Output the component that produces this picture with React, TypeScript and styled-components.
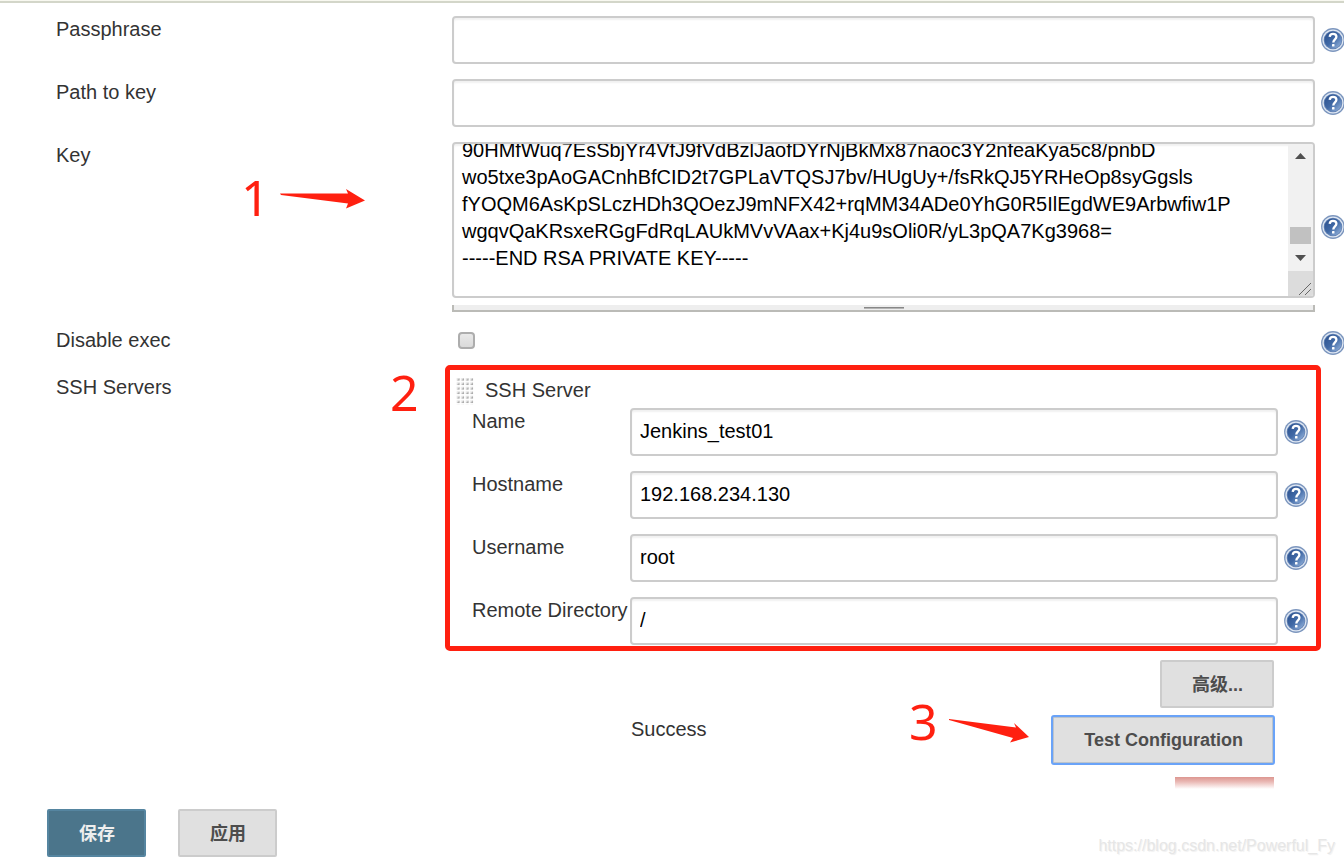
import React, { useLayoutEffect, useRef } from "react";
import styled, { createGlobalStyle, css } from "styled-components";

const RED = "#ff2010";

const GlobalStyle = createGlobalStyle`
  * { box-sizing: border-box; }
  body {
    margin: 0;
    background: #fff;
    color: #333;
    font-family: "Liberation Sans", Arial, "Noto Sans CJK SC", sans-serif;
    font-size: 20px;
    line-height: 26px;
  }
  button, input, textarea { font-family: inherit; }
`;

const Page = styled.main`
  position: relative;
  overflow: hidden;
  min-height: 100vh;
  border-top: 1px solid #f8f8f0;
`;

const Form = styled.form`
  border-top: 2px solid #d3d6c9;
  padding: 13px 0 0 56px;
`;

const Rows = styled.div`
  display: flex;
  flex-direction: column;
  gap: 15px;
`;

const Row = styled.div`
  position: relative;
  display: grid;
  grid-template-columns: 396px minmax(0, 1fr) 29px;
`;

const Label = styled.label`
  align-self: start;
  justify-self: start;
  white-space: nowrap;
`;

const Caption = styled.span`
  white-space: nowrap;
`;

const fieldFrame = css`
  border: 2px solid #ccc;
  border-radius: 4px;
  background: #fff;
  box-shadow: inset 0 2px 2px rgba(0, 0, 0, 0.06);
`;

const TextInput = styled.input`
  ${fieldFrame}
  width: 100%;
  height: 48px;
  padding: 0 8px 1px;
  color: #000;
  font-size: 20px;
  outline: none;
`;

const KeyBox = styled.div`
  ${fieldFrame}
  display: flex;
  height: 156px;
  overflow: hidden;
`;

const KeyText = styled.textarea`
  flex: 1;
  min-width: 0;
  height: 100%;
  padding: 6px 8px;
  border: 0;
  outline: none;
  resize: none;
  overflow: hidden;
  background: transparent;
  color: #000;
  font-size: 20px;
  line-height: 27px;
  white-space: pre;
`;

const ScrollTrack = styled.div`
  display: flex;
  flex-direction: column;
  width: 25px;
  background: #f1f1f1;
`;

const ArrowCell = styled.svg`
  display: block;
  width: 25px;
  height: 25px;
`;

const ThumbArea = styled.div`
  display: flex;
  flex: 1;
  flex-direction: column;
  justify-content: flex-end;
  padding: 0 2px 2px;
`;

const Thumb = styled.div`
  height: 17px;
  background: #c1c1c1;
`;

const ResizeCorner = styled(ArrowCell)`
  background: #dcdcdc;
`;

const DragBar = styled.div`
  display: flex;
  justify-content: center;
  height: 7px;
  margin-top: 7px;
  padding-top: 2px;
  border: solid #bbbbb7;
  border-width: 0 2px 2px;
  background: #eee;
`;

const Grip = styled.span`
  width: 40px;
  height: 2px;
  border-top: 1px solid #888;
  background: #b4b4b4;
`;

const HelpButton = styled.button`
  align-self: center;
  flex: none;
  width: 24px;
  height: 24px;
  margin: 0 0 0 6px;
  padding: 0;
  border: 0;
  background: none;
  cursor: pointer;
  svg { display: block; }
`;

const CheckRow = styled(Row)`
  min-height: 32px;
`;

const Checkbox = styled.input`
  appearance: none;
  width: 17px;
  height: 17px;
  margin: 5px 0 0 6px;
  border: 2px solid #adadad;
  border-radius: 4px;
  background: linear-gradient(#e9e9e9, #dadada);
`;

const ServerPanel = styled.section`
  position: relative;
  padding: 0 7px 0 20px;
`;

const PanelHead = styled.div`
  display: flex;
  align-items: flex-start;
  gap: 11px;
  height: 34px;
  margin-left: -16px;
  padding-top: 3px;
`;

const ServerRow = styled.div`
  display: grid;
  grid-template-columns: 158px minmax(0, 1fr) 30px;
`;

const HighlightFrame = styled.div`
  position: absolute;
  inset: -9px -6px -6px -7px;
  border: 5px solid ${RED};
  border-radius: 5px;
  pointer-events: none;
`;

const Actions = styled.div`
  display: flex;
  flex-direction: column;
  align-items: flex-end;
  gap: 8px;
  padding: 15px 70px 0 0;
`;

const TestRow = styled.div`
  position: relative;
  display: flex;
  align-self: stretch;
  justify-content: space-between;
  padding-left: 575px;
`;

const Button = styled.button<{ $primary?: boolean; $focused?: boolean }>`
  height: 48px;
  padding: 0 29px 2px 30px;
  border: 2px solid ${(p) => (p.$primary ? "#5585a0" : "#ccc")};
  border-radius: 2px;
  background: ${(p) => (p.$primary ? "#4b758b" : "#e0e0e0")};
  color: ${(p) => (p.$primary ? "#eee" : "#4d4d4d")};
  font-size: 18px;
  font-weight: bold;
  white-space: nowrap;
  cursor: pointer;
  ${(p) =>
    p.$focused &&
    css`
      padding-bottom: 0;
      border-color: #bcc4cc;
      outline: 2px solid #6aa3f8;
      outline-offset: -1px;
    `}
`;

const FadedDelete = styled.div`
  width: 99px;
  height: 12px;
  margin-top: 5px;
  background: linear-gradient(#dc9690, #eab9b5 40%, #fff);
`;

const Footer = styled.footer`
  display: flex;
  gap: 32px;
  padding: 20px 9px 8px 47px;
`;

const Watermark = styled.span`
  align-self: flex-end;
  margin-left: auto;
  color: #e6e6e6;
  font-size: 16px;
  line-height: 22px;
  text-shadow: 1px 1px 1px #f0f0f0;
`;

const StepMark = styled.span<{ $x: string; $y: number }>`
  position: absolute;
  left: ${(p) => p.$x};
  top: ${(p) => p.$y}px;
  color: ${RED};
  font-family: "Noto Sans", "Open Sans", sans-serif;
  font-size: 50px;
  line-height: 52px;
`;

const StepArrow = styled.svg<{ $x: string; $y: number }>`
  position: absolute;
  left: ${(p) => p.$x};
  top: ${(p) => p.$y}px;
  fill: ${RED};
`;

function Help({ topic }: { topic: string }) {
  return (
    <HelpButton type="button" aria-label={`Help for ${topic}`}>
      <svg width="24" height="24" viewBox="0 0 24 24">
        <defs>
          <linearGradient id="disc" x1="0" y1="0" x2="1" y2="1">
            <stop offset="0" stopColor="#2a4f8c" />
            <stop offset="0.5" stopColor="#4069a6" />
            <stop offset="1" stopColor="#9dbbe2" />
          </linearGradient>
        </defs>
        <circle cx="12" cy="12" r="11.900" fill="#7c96be" />
        <circle cx="12" cy="12" r="10.600" fill="#e0e8f3" />
        <circle cx="12" cy="12" r="9.300" fill="#6584b5" />
        <circle cx="12" cy="12" r="8.500" fill="url(#disc)" />
        <path
          d="M8.700 8.800C8.900 6.700 10.200 5.800 12 5.800c2 0 3.400 1.100 3.400 2.900 0 2.600-3.100 2.700-3.100 5.800"
          fill="none"
          stroke="#fff"
          strokeWidth="2.300"
        />
        <rect x="11" y="16" width="2.500" height="2.500" rx="0.600" fill="#fff" />
      </svg>
    </HelpButton>
  );
}

function DragDots() {
  return (
    <svg width="18" height="28" viewBox="0 0 18 28" aria-hidden="true">
      <defs>
        <pattern id="dots" width="4.500" height="4.500" patternUnits="userSpaceOnUse">
          <path d="M3.600 0.600V3.600H0.600z" fill="#aaa" />
          <path d="M0.600 0.600H3.600L0.600 3.600z" fill="#e6e6e6" />
        </pattern>
      </defs>
      <rect y="1" width="18" height="27" fill="url(#dots)" />
    </svg>
  );
}

const KEY_TAIL = [
  "90HMfWuq7EsSbjYr4VfJ9fVdBzlJaofDYrNjBkMx87naoc3Y2nfeaKya5c8/pnbD",
  "wo5txe3pAoGACnhBfCID2t7GPLaVTQSJ7bv/HUgUy+/fsRkQJ5YRHeOp8syGgsls",
  "fYOQM6AsKpSLczHDh3QOezJ9mNFX42+rqMM34ADe0YhG0R5IlEgdWE9Arbwfiw1P",
  "wgqvQaKRsxeRGgFdRqLAUkMVvVAax+Kj4u9sOli0R/yL3pQA7Kg3968=",
  "-----END RSA PRIVATE KEY-----",
  "",
].join("\n");

const SERVER_FIELDS = [
  { id: "name", label: "Name", value: "Jenkins_test01" },
  { id: "hostname", label: "Hostname", value: "192.168.234.130" },
  { id: "username", label: "Username", value: "root" },
  { id: "remote", label: "Remote Directory", value: "/" },
];

export default function App() {
  const keyRef = useRef<HTMLTextAreaElement>(null);

  useLayoutEffect(() => {
    if (keyRef.current) keyRef.current.scrollTop = 13;
  }, []);

  return (
    <Page>
      <GlobalStyle />
      <Form onSubmit={(e) => e.preventDefault()}>
        <Rows>
          <Row>
            <Label htmlFor="passphrase">Passphrase</Label>
            <TextInput id="passphrase" />
            <Help topic="Passphrase" />
          </Row>
          <Row>
            <Label htmlFor="path">Path to key</Label>
            <TextInput id="path" />
            <Help topic="Path to key" />
          </Row>
          <Row>
            <Label htmlFor="key">Key</Label>
            <div>
              <KeyBox>
                <KeyText id="key" ref={keyRef} spellCheck={false} defaultValue={KEY_TAIL} />
                <ScrollTrack>
                  <ArrowCell viewBox="0 0 25 25">
                    <path d="M7 15h11l-5.500-6z" fill="#505050" />
                  </ArrowCell>
                  <ThumbArea>
                    <Thumb />
                  </ThumbArea>
                  <ArrowCell viewBox="0 0 25 25">
                    <path d="M7 9h11l-5.500 6z" fill="#505050" />
                  </ArrowCell>
                  <ResizeCorner viewBox="0 0 25 25">
                    <path d="M11 24L23 12M17 24l6-6" stroke="#666" fill="none" />
                  </ResizeCorner>
                </ScrollTrack>
              </KeyBox>
              <DragBar>
                <Grip />
              </DragBar>
            </div>
            <Help topic="Key" />
            <StepMark $x="185px" $y={29}>1</StepMark>
            <StepArrow $x="223px" $y={46} width="87" height="22" viewBox="0 0 87 22">
              <path d="M1 5.500L69 5.500 67 1 86 12.500 67 20.500 69 15.500 2 7z" />
            </StepArrow>
          </Row>
          <CheckRow>
            <Label htmlFor="disable">Disable exec</Label>
            <div>
              <Checkbox id="disable" type="checkbox" />
            </div>
            <Help topic="Disable exec" />
          </CheckRow>
          <Row>
            <Caption>SSH Servers</Caption>
            <ServerPanel>
              <PanelHead>
                <DragDots />
                <Caption>SSH Server</Caption>
              </PanelHead>
              <Rows>
                {SERVER_FIELDS.map((f) => (
                  <ServerRow key={f.id}>
                    <Label htmlFor={f.id}>{f.label}</Label>
                    <TextInput id={f.id} defaultValue={f.value} />
                    <Help topic={f.label} />
                  </ServerRow>
                ))}
              </Rows>
              <HighlightFrame />
            </ServerPanel>
            <StepMark $x="334px" $y={-8}>2</StepMark>
          </Row>
        </Rows>
        <Actions>
          <Button type="button">高级...</Button>
          <TestRow>
            <Caption>Success</Caption>
            <Button type="button" $focused>Test Configuration</Button>
            <StepMark $x="calc(100% - 365px)" $y={-21}>3</StepMark>
            <StepArrow $x="calc(100% - 326px)" $y={2} width="82" height="26" viewBox="0 0 82 26">
              <path d="M1 1L68 9.500 66 5 81 19 62 24.500 65 20 1 2z" />
            </StepArrow>
          </TestRow>
          <FadedDelete />
        </Actions>
      </Form>
      <Footer>
        <Button type="button" $primary>保存</Button>
        <Button type="button">应用</Button>
        <Watermark>https://blog.csdn.net/Powerful_Fy</Watermark>
      </Footer>
    </Page>
  );
}
